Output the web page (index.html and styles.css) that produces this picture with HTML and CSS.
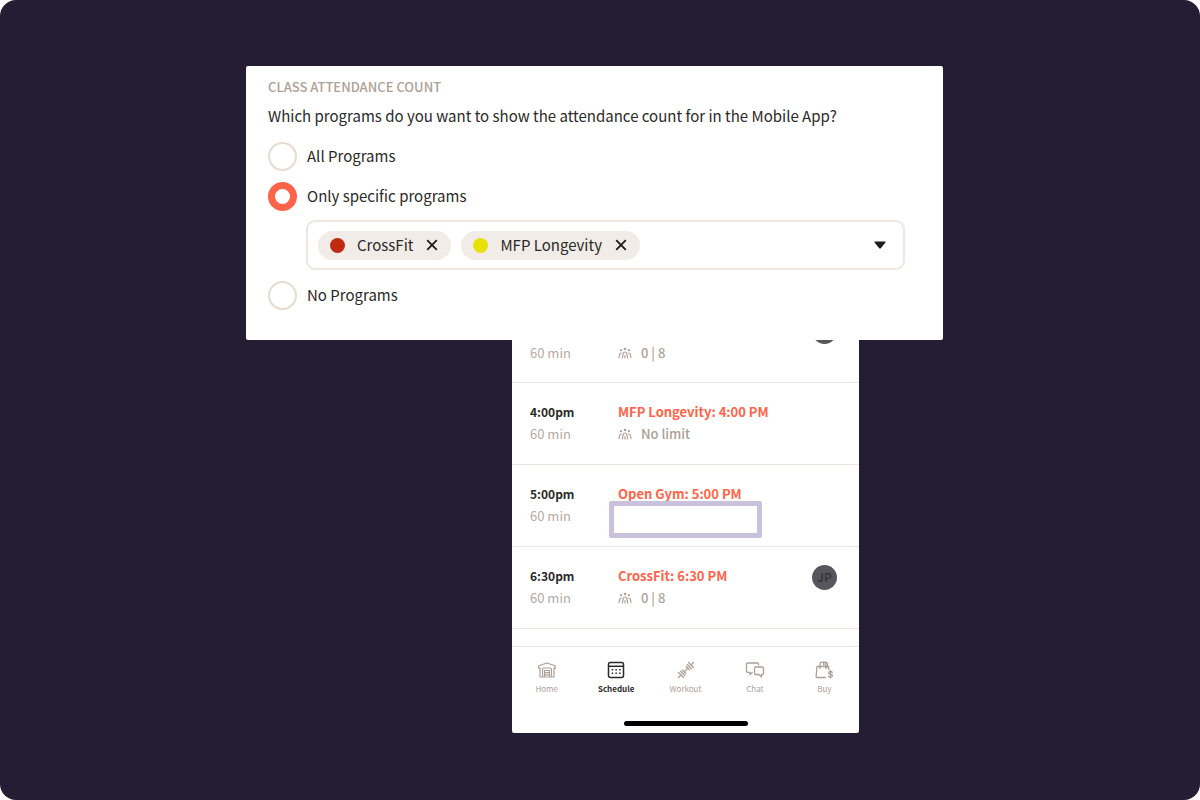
FILE: index.html
```html
<!DOCTYPE html>
<html lang="en">
<head>
<meta charset="utf-8">
<meta name="viewport" content="width=device-width, initial-scale=1">
<title>Class attendance count</title>
<link rel="stylesheet" href="styles.css">
</head>
<body>
<svg width="0" height="0" class="sprite" aria-hidden="true">
  <symbol id="people" viewBox="0 0 14 12">
    <g fill="none" stroke="currentColor" stroke-width="1.2" stroke-linecap="round">
      <path d="M4.300 11L5.300 6.200Q5.600 5 7 5T8.700 6.200L9.700 11M7 8.500V11M1 10.500L1.700 7.200Q2 6 3.300 6M13 10.500L12.300 7.200Q12 6 10.700 6"/>
    </g>
    <g fill="currentColor"><circle cx="7" cy="2" r="1.3"/><circle cx="3" cy="3.200" r="1.100"/><circle cx="11" cy="3.200" r="1.100"/></g>
  </symbol>
</svg>
<main class="stage">
  <div class="board">
    <form class="panel">
      <h1 class="panel-title">CLASS ATTENDANCE COUNT</h1>
      <fieldset class="options">
        <legend class="question">Which programs do you want to show the attendance count for in the Mobile App?</legend>
        <label class="option"><input class="radio" type="radio" name="programs"><span>All Programs</span></label>
        <label class="option"><input class="radio" type="radio" name="programs" checked><span>Only specific programs</span></label>
        <div class="picker">
          <span class="tag"><i class="dot dot-red"></i>CrossFit<button class="remove" type="button" aria-label="Remove CrossFit"><svg width="12" height="12" viewBox="0 0 12 12"><path d="M1.2 1.2l9.6 9.6M10.8 1.2l-9.6 9.6" stroke="currentColor" stroke-width="1.8"/></svg></button></span>
          <span class="tag"><i class="dot dot-yellow"></i>MFP Longevity<button class="remove" type="button" aria-label="Remove MFP Longevity"><svg width="12" height="12" viewBox="0 0 12 12"><path d="M1.2 1.2l9.6 9.6M10.8 1.2l-9.6 9.6" stroke="currentColor" stroke-width="1.8"/></svg></button></span>
          <button class="toggle" type="button" aria-label="Show programs"><svg width="12" height="8" viewBox="0 0 12 8"><path d="M1 .5h10q.9 0 .4 1L7 7Q6 8 5 7L.6 1.5Q.1.5 1 .5z" fill="currentColor"/></svg></button>
        </div>
        <label class="option"><input class="radio" type="radio" name="programs"><span>No Programs</span></label>
      </fieldset>
    </form>

    <section class="phone">
      <article class="class-row class-row-cut">
        <div class="when"><span class="length">60 min</span></div>
        <div class="what"><span class="count"><svg width="14" height="12"><use href="#people"/></svg>0 | 8</span></div>
        <span class="avatar"></span>
      </article>
      <article class="class-row">
        <div class="when"><b class="time">4:00pm</b><span class="length">60 min</span></div>
        <div class="what"><a class="name" href="#mfp">MFP Longevity: 4:00 PM</a><span class="count"><svg width="14" height="12"><use href="#people"/></svg>No limit</span></div>
      </article>
      <article class="class-row">
        <div class="when"><b class="time">5:00pm</b><span class="length">60 min</span></div>
        <div class="what"><a class="name" href="#gym">Open Gym: 5:00 PM</a><span class="highlight"></span></div>
      </article>
      <article class="class-row">
        <div class="when"><b class="time">6:30pm</b><span class="length">60 min</span></div>
        <div class="what"><a class="name" href="#crossfit">CrossFit: 6:30 PM</a><span class="count"><svg width="14" height="12"><use href="#people"/></svg>0 | 8</span></div>
        <span class="avatar">JP</span>
      </article>
      <nav class="tabs">
        <a class="tab" href="#home"><svg width="20" height="20" viewBox="0 0 20 20" fill="none" stroke="currentColor" stroke-width="1.2" stroke-linejoin="round"><path d="M3 17V8L1.700 8.200V5.800L10 3l8.300 2.800v2.400L17 8v9h-2.500V9.500q0-1.500-1.500-1.500H7q-1.500 0-1.500 1.500V17zM5.500 17h9M7.500 17v-6.500h5V17M7.500 12.600h5M7.500 14.800h5"/></svg>Home</a>
        <a class="tab tab-active" href="#schedule" aria-current="page"><svg width="20" height="20" viewBox="0 0 20 20" fill="none" stroke="currentColor" stroke-width="1.500"><rect x="2.500" y="2.500" width="15" height="15" rx="2"/><path d="M2.500 6.300h15"/><path d="M5.700 9.800h9.500M5.700 13.300h9.500" stroke-width="1.500" stroke-dasharray="1.500 2.200"/></svg>Schedule</a>
        <a class="tab" href="#workout"><svg width="20" height="20" viewBox="0 0 20 20" fill="none" stroke="currentColor" stroke-width="1.300" stroke-linecap="round"><path d="M8 12l4-4M2.500 12.500l5 5M4.500 11.300l4.200 4.200M6.500 10.300l3.200 3.200M10.300 6.500l3.200 3.200M11.300 4.500l4.200 4.200M12.500 2.500l5 5M2.500 17.500l2-2M15.500 4.500l2-2"/></svg>Workout</a>
        <a class="tab" href="#chat"><svg width="20" height="20" viewBox="0 0 20 20" fill="none" stroke="currentColor" stroke-width="1.300" stroke-linejoin="round"><path d="M7.500 12.300L5 14.500V12.300H2.700q-1.200 0-1.200-1.200V4.200Q1.500 3 2.700 3h9.600q1.200 0 1.200 1.200V5.500M10.700 7h6.600q1.200 0 1.200 1.200v5.100q0 1.200-1.200 1.200h-.800V17L14 14.500h-3.300q-1.200 0-1.200-1.200V8.200Q9.500 7 10.700 7z"/></svg>Chat</a>
        <a class="tab" href="#buy"><svg width="20" height="20" viewBox="0 0 20 20" fill="none" stroke="currentColor" stroke-width="1.300" stroke-linecap="round" stroke-linejoin="round"><path d="M11.500 17.500H3Q2 17.500 2.100 16.500L3 6.500h11.500l.4 3M6 8.500V4.200q0-2 1.900-2t1.900 2V6M9 2.500q2.800-.8 2.800 1.700v4.300M9.300 2.200h2.200q2 0 2 2v3.300"/><path d="M18.300 12.400q-.4-1-1.800-1-1.800 0-1.800 1.400t1.800 1.400q1.900 0 1.900 1.500t-1.900 1.500q-1.500 0-1.900-1M16.500 10.400v7.800"/></svg>Buy</a>
      </nav>
      <div class="home-bar"></div>
    </section>
  </div>
</main>
</body>
</html>
```
FILE: styles.css
```css
* { box-sizing: border-box; }
body {
  margin: 0;
  background: #fff;
  color: #2b2929;
  font-family: "Noto Sans CJK SC", "Noto Sans", sans-serif;
  font-size: 15px;
  line-height: 24px;
}
.sprite { position: absolute; }
button { border: 0; padding: 0; background: none; color: #1d1b1b; display: flex; }
a { color: inherit; text-decoration: none; }
svg { flex: none; display: block; }
.stage {
  display: flex;
  justify-content: center;
  min-height: 100vh;
  padding: 66px 11px 66px 0;
  border-radius: 16px;
  background: #251d33;
}
.board { width: 100%; max-width: 697px; }
.panel {
  padding: 10px 38px 29px 22px;
  border-radius: 2px;
  background: #fff;
}
.panel-title {
  margin: 0 0 6px;
  color: #ada096;
  font-size: 13px;
  font-weight: 500;
  line-height: 22px;
}
.options { margin: 0; border: 0; padding: 0; min-width: 0; }
.question { padding: 0; margin-bottom: 12px; }
.option { display: flex; align-items: center; gap: 10px; height: 32px; margin-bottom: 8px; }
.radio {
  appearance: none;
  flex: none;
  width: 29px;
  height: 29px;
  margin: 0;
  border: 2px solid #e8dbd0;
  border-radius: 50%;
  background: #fff;
}
.radio:checked { border: 7px solid #ff6349; }
.option:last-child { margin: 9px 0 0; }
.picker {
  display: flex;
  align-items: center;
  gap: 10px;
  height: 50px;
  margin-left: 38px;
  padding: 0 17px 0 10px;
  border: 2px solid #f1e7df;
  border-radius: 9px;
}
.tag {
  display: flex;
  align-items: center;
  height: 29px;
  padding: 0 13px 0 12px;
  border-radius: 15px;
  background: #f1ece7;
}
.dot { width: 15px; height: 15px; margin-right: 12px; border-radius: 50%; }
.dot-red { background: #bf2a10; }
.dot-yellow { background: #e7e106; }
.remove { margin-left: 13px; }
.toggle { margin-left: auto; }
.phone {
  width: 347px;
  margin-left: 266px;
  padding-bottom: 7px;
  border-radius: 0 0 2px 2px;
  background: #fff;
  font-size: 13px;
  line-height: 22px;
}
.class-row {
  display: flex;
  align-items: flex-start;
  height: 82px;
  padding: 18px 22px 0 18px;
  border-bottom: 1px solid #eee6e1;
}
.class-row-cut { height: 43px; padding-top: 2px; overflow: hidden; }
.class-row-cut .avatar { margin-top: -23px; }
.when { display: flex; flex-direction: column; width: 88px; }
.what { position: relative; display: flex; flex-direction: column; flex: 1; }
.time { font-size: 12px; font-weight: 700; }
.name { color: #ff6349; font-weight: 700; }
.length { color: #b5aaa3; }
.count { display: flex; align-items: center; gap: 9px; color: #ada096; font-weight: 500; }
.highlight {
  position: absolute;
  top: 18px;
  left: -9px;
  width: 153px;
  height: 37px;
  border: 5px solid #cac2dc;
  border-radius: 2px;
}
.avatar {
  width: 25px;
  height: 25px;
  border-radius: 50%;
  background: #56565c;
  color: #333238;
  font-size: 12px;
  font-weight: 500;
  line-height: 24px;
  text-align: center;
}
.tabs {
  display: flex;
  margin-top: 17px;
  padding-top: 13px;
  border-top: 1px solid #eee6e1;
}
.tab {
  display: flex;
  flex: 1;
  flex-direction: column;
  align-items: center;
  gap: 2px;
  color: #ada096;
  font-size: 8px;
  line-height: 14px;
}
.tab-active { color: #2b2929; font-weight: 700; }
.home-bar {
  width: 124px;
  height: 5px;
  margin: 25px auto 0;
  border-radius: 3px;
  background: #000;
}
```
